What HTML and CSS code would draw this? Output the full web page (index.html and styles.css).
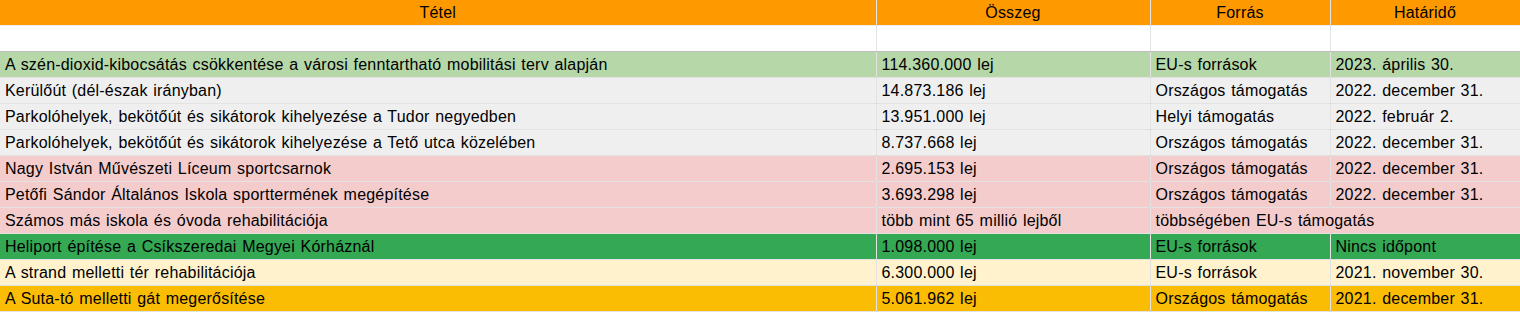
FILE: index.html
```html
<!DOCTYPE html>
<html lang="hu">
<head>
<meta charset="utf-8">
<title>Tételek</title>
<link rel="stylesheet" href="styles.css">
</head>
<body>
<table class="sheet">
  <colgroup>
    <col class="c1"><col class="c2"><col class="c3"><col class="c4">
  </colgroup>
  <thead>
    <tr class="head">
      <th>Tétel</th><th>Összeg</th><th>Forrás</th><th>Határidő</th>
    </tr>
  </thead>
  <tbody>
    <tr class="blank"><td></td><td></td><td></td><td></td></tr>
    <tr class="lgreen"><td>A szén-dioxid-kibocsátás csökkentése a városi fenntartható mobilitási terv alapján</td><td>114.360.000 lej</td><td>EU-s források</td><td>2023. április 30.</td></tr>
    <tr class="grey"><td>Kerülőút (dél-észak irányban)</td><td>14.873.186 lej</td><td>Országos támogatás</td><td>2022. december 31.</td></tr>
    <tr class="grey"><td>Parkolóhelyek, bekötőút és sikátorok kihelyezése a Tudor negyedben</td><td>13.951.000 lej</td><td>Helyi támogatás</td><td>2022. február 2.</td></tr>
    <tr class="grey"><td>Parkolóhelyek, bekötőút és sikátorok kihelyezése a Tető utca közelében</td><td>8.737.668 lej</td><td>Országos támogatás</td><td>2022. december 31.</td></tr>
    <tr class="pink"><td>Nagy István Művészeti Líceum sportcsarnok</td><td>2.695.153 lej</td><td>Országos támogatás</td><td>2022. december 31.</td></tr>
    <tr class="pink"><td>Petőfi Sándor Általános Iskola sporttermének megépítése</td><td>3.693.298 lej</td><td>Országos támogatás</td><td>2022. december 31.</td></tr>
    <tr class="pink"><td>Számos más iskola és óvoda rehabilitációja</td><td>több mint 65 millió lejből</td><td colspan="2">többségében EU-s támogatás</td></tr>
    <tr class="dgreen"><td>Heliport építése a Csíkszeredai Megyei Kórháznál</td><td>1.098.000 lej</td><td>EU-s források</td><td>Nincs időpont</td></tr>
    <tr class="cream"><td>A strand melletti tér rehabilitációja</td><td>6.300.000 lej</td><td>EU-s források</td><td>2021. november 30.</td></tr>
    <tr class="gold"><td>A Suta-tó melletti gát megerősítése</td><td>5.061.962 lej</td><td>Országos támogatás</td><td>2021. december 31.</td></tr>
  </tbody>
</table>
</body>
</html>
```

FILE: styles.css
```css
html, body {
  margin: 0;
  padding: 0;
  background: #ffffff;
}

.sheet {
  width: 1520px;
  border-collapse: collapse;
  table-layout: fixed;
  font-family: "Liberation Sans", Arial, sans-serif;
  font-size: 16px;
  letter-spacing: 0.2px;
  word-spacing: 1px;
  color: #000000;
}

.c1 { width: 876px; }
.c2 { width: 274px; }
.c3 { width: 180px; }
.c4 { width: 190px; }

.sheet th,
.sheet td {
  height: 25px;
  padding: 0 0 0 5px;
  line-height: 25px;
  white-space: nowrap;
  overflow: hidden;
  text-align: left;
  vertical-align: middle;
  font-weight: normal;
  border-right: 1px solid rgba(0, 0, 0, 0.11);
  border-bottom: 1px solid rgba(0, 0, 0, 0.11);
}

.head th {
  text-align: center;
  padding: 0;
  background: #ff9900;
  border-bottom-color: rgba(0, 0, 0, 0.06);
}

.blank td {
  background: #ffffff;
  border-bottom-color: #bdbdbd;
}

.lgreen td { background: #b6d7a8; }
.grey td { background: #efefef; }
.pink td { background: #f4cccc; }
.dgreen td { background: #34a853; }
.cream td { background: #fff2cc; }
.gold td { background: #fbbc04; }

.sheet tr > :last-child {
  border-right-color: #d9d9d9;
}
```
